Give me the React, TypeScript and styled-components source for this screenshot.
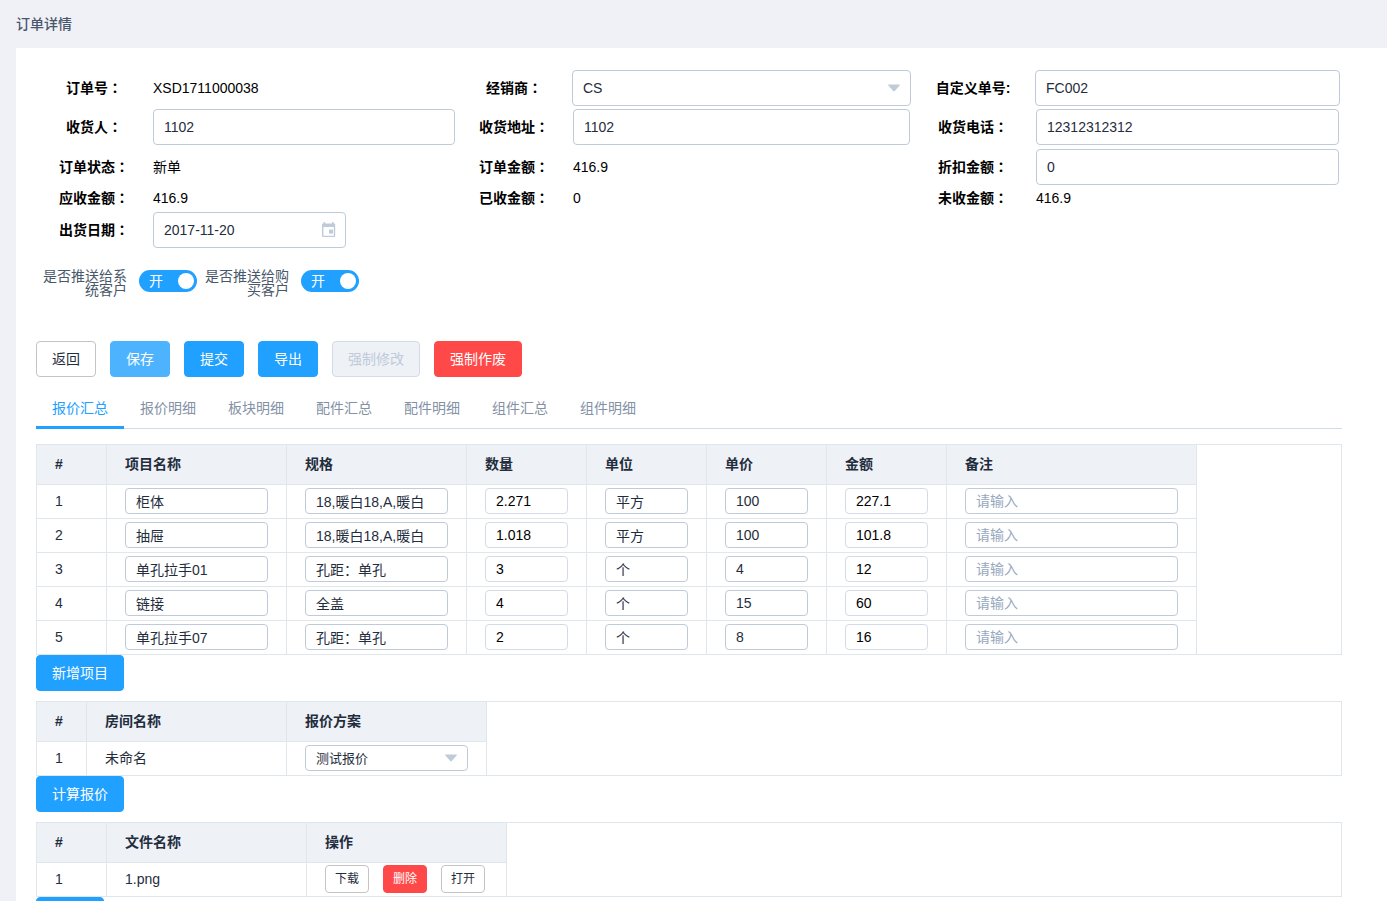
import React, { useState } from "react";
import styled, { createGlobalStyle, css } from "styled-components";

const color = {
  page: "#f0f1f7",
  blue: "#20a0ff",
  blueLight: "#4db3ff",
  red: "#ff4949",
  ink: "#1f2d3d",
  muted: "#48576a",
  tab: "#8391a5",
  hint: "#97a8be",
  field: "#bfcbd9",
  fieldOff: "#d3dce6",
  head: "#eef1f6",
  line: "#dfe6ec",
  button: "#c4c4c4",
};

const GlobalStyle = createGlobalStyle`
  *, *::before, *::after { box-sizing: border-box; }
  body {
    margin: 0;
    background: ${color.page};
    color: #000;
    font-family: "Liberation Sans", "Noto Sans CJK SC", sans-serif;
    font-size: 14px;
    line-height: 19px;
  }
  button, input, select { font: inherit; }
`;

const Page = styled.div`
  min-height: 100vh;
  padding-left: 16px;
`;

const Title = styled.h1`
  margin: 0;
  font-size: 14px;
  font-weight: 500;
  line-height: 48px;
  color: ${color.muted};
`;

const Panel = styled.main`
  padding: 22px 45px 20px 20px;
  background: #fff;
`;

const Details = styled.div`
  display: grid;
  grid-template-columns: 116px 304fr 116px 339fr 124px 305fr;
  row-gap: 2px;
  align-items: center;
  padding-right: 2px;
`;

const FieldLabel = styled.label`
  font-weight: 700;
  text-align: center;
`;

/* The TC face sets the full-width colon in the middle of its box. */
const Colon = styled.span`
  font-family: "Noto Sans CJK TC", sans-serif;
  line-height: 1;
`;

const FieldValue = styled.div<{ $flush?: boolean }>`
  min-width: 0;
  padding: ${(p) => (p.$flush ? "0" : "1px")};
`;

const control = css<{ $small?: boolean }>`
  display: block;
  width: 100%;
  height: ${(p) => (p.$small ? "26px" : "36px")};
  padding: 0 10px;
  border: 1px solid ${color.field};
  border-radius: 4px;
  background: #fff;
  color: ${color.ink};
  outline: none;
  &:focus { border-color: ${color.blue}; }
`;

const TextInput = styled.input<{ $small?: boolean }>`
  ${control}
  &::placeholder { color: ${color.hint}; opacity: 1; }
  &:disabled {
    border-color: ${color.fieldOff};
    color: #000;
  }
`;

const SelectInput = styled.select<{ $small?: boolean }>`
  ${control}
  appearance: none;
  padding-right: 32px;
  font-size: ${(p) => (p.$small ? "13px" : "14px")};
`;

const ControlWrap = styled.div<{ $width?: string }>`
  position: relative;
  width: ${(p) => p.$width ?? "100%"};
`;

const ControlIcon = styled.span`
  position: absolute;
  top: 0;
  right: 10px;
  bottom: 0;
  display: flex;
  align-items: center;
  pointer-events: none;
  color: ${color.field};
  svg { display: block; }
`;

const Switches = styled.div`
  display: flex;
  gap: 8px;
  margin: 20px 0 44px 7px;
`;

const SwitchItem = styled.label`
  display: flex;
  align-items: center;
  gap: 12px;
  color: ${color.muted};
  cursor: pointer;
`;

const SwitchText = styled.span`
  width: 84px;
  line-height: 14px;
  text-align: right;
`;

const SwitchInput = styled.input`
  position: absolute;
  width: 58px;
  height: 22px;
  margin: 0;
  opacity: 0;
`;

const SwitchTrack = styled.span<{ $on: boolean }>`
  display: flex;
  flex-direction: ${(p) => (p.$on ? "row" : "row-reverse")};
  align-items: center;
  justify-content: space-between;
  width: 58px;
  height: 22px;
  margin-bottom: 4px;
  padding: ${(p) => (p.$on ? "0 3px 0 10px" : "0 10px 0 3px")};
  border-radius: 11px;
  background: ${(p) => (p.$on ? color.blue : color.field)};
  color: #fff;
  &::after {
    content: "";
    width: 16px;
    height: 16px;
    border-radius: 50%;
    background: #fff;
  }
`;

const Actions = styled.div`
  display: flex;
  flex-wrap: wrap;
  gap: 14px;
`;

type Tone = "plain" | "primary" | "light" | "danger";

const tones: Record<Tone, { bg: string; border: string; text: string }> = {
  plain: { bg: "#fff", border: color.button, text: color.ink },
  primary: { bg: color.blue, border: color.blue, text: "#fff" },
  light: { bg: color.blueLight, border: color.blueLight, text: "#fff" },
  danger: { bg: color.red, border: color.red, text: "#fff" },
};

const Button = styled.button<{ $tone?: Tone; $small?: boolean }>`
  display: block;
  height: ${(p) => (p.$small ? "28px" : "36px")};
  padding: 0 ${(p) => (p.$small ? "9px" : "15px")};
  border: 1px solid ${(p) => tones[p.$tone ?? "plain"].border};
  border-radius: 4px;
  background: ${(p) => tones[p.$tone ?? "plain"].bg};
  color: ${(p) => tones[p.$tone ?? "plain"].text};
  font-size: ${(p) => (p.$small ? "12px" : "14px")};
  line-height: 1;
  white-space: nowrap;
  cursor: pointer;
  &:disabled {
    border-color: ${color.fieldOff};
    background: ${color.head};
    color: ${color.field};
    cursor: not-allowed;
  }
`;

const Tabs = styled.div`
  display: flex;
  margin: 10px 0 15px;
  border-bottom: 1px solid ${color.fieldOff};
`;

const Tab = styled.button<{ $active: boolean }>`
  height: 42px;
  margin-bottom: -1px;
  padding: 3px 16px 0;
  border: 0;
  border-bottom: 3px solid ${(p) => (p.$active ? color.blue : "transparent")};
  background: none;
  color: ${(p) => (p.$active ? color.blue : color.tab)};
  white-space: nowrap;
  cursor: pointer;
`;

const TableFrame = styled.div`
  overflow-x: auto;
  border: 1px solid ${color.line};
  & + button { margin-bottom: 10px; }
`;

const Table = styled.table`
  table-layout: fixed;
  width: 0;
  border-collapse: separate;
  border-spacing: 0;
  color: ${color.ink};
  tbody tr:last-child td {
    height: 33px;
    border-bottom: 0;
  }
`;

const Th = styled.th<{ $width: number }>`
  width: ${(p) => p.$width}px;
  height: 40px;
  padding: 0 18px;
  border-right: 1px solid ${color.line};
  border-bottom: 1px solid ${color.line};
  background: ${color.head};
  text-align: left;
`;

const Td = styled.td`
  height: 34px;
  padding: 0 18px 1px;
  border-right: 1px solid ${color.line};
  border-bottom: 1px solid ${color.line};
`;

const RowActions = styled.div`
  display: flex;
  gap: 14px;
`;

const Caret = () => (
  <svg width="14" height="8" viewBox="0 0 14 8" fill="currentColor" aria-hidden="true">
    <path d="M1.6 0.5h10.8q1 0 .4.8L7.8 6.9q-.8.8-1.6 0L1.2 1.3q-.6-.8.4-.8z" />
  </svg>
);

const CalendarIcon = () => (
  <svg width="14" height="16" viewBox="0 0 14 16" fill="currentColor" aria-hidden="true">
    <path d="M1.6 0h1.600v2H1.6zM10 0h1.600v2H10z" />
    <path
      fillRule="evenodd"
      d="M1 1.400h11.200q1 0 1 1v11.600q0 1-1 1H1q-1 0-1-1V2.400q0-1 1-1zM1.400 5v8.700h10.400V5z"
    />
    <path d="M7 7.600h4v4H7z" />
  </svg>
);

type Column = { title: string; width: number };

const DataTable = ({ columns, children }: { columns: Column[]; children: React.ReactNode }) => (
  <TableFrame>
    <Table>
      <thead>
        <tr>
          {columns.map((c) => (
            <Th key={c.title} $width={c.width} scope="col">
              {c.title}
            </Th>
          ))}
        </tr>
      </thead>
      <tbody>{children}</tbody>
    </Table>
  </TableFrame>
);

const Label = ({ text, htmlFor }: { text: string; htmlFor?: string }) => (
  <FieldLabel as={htmlFor ? "label" : "span"} htmlFor={htmlFor}>
    {text}
    <Colon>：</Colon>
  </FieldLabel>
);

const Switch = ({ label }: { label: string }) => {
  const [on, setOn] = useState(true);
  return (
    <SwitchItem>
      <SwitchText>{label}</SwitchText>
      <SwitchInput type="checkbox" role="switch" checked={on} onChange={() => setOn(!on)} />
      <SwitchTrack $on={on}>{on ? "开" : "关"}</SwitchTrack>
    </SwitchItem>
  );
};

const itemColumns: Column[] = [
  { title: "#", width: 70 },
  { title: "项目名称", width: 180 },
  { title: "规格", width: 180 },
  { title: "数量", width: 120 },
  { title: "单位", width: 120 },
  { title: "单价", width: 120 },
  { title: "金额", width: 120 },
  { title: "备注", width: 250 },
];

const items = [
  ["柜体", "18,暖白18,A,暖白", "2.271", "平方", "100", "227.1"],
  ["抽屉", "18,暖白18,A,暖白", "1.018", "平方", "100", "101.8"],
  ["单孔拉手01", "孔距：单孔", "3", "个", "4", "12"],
  ["链接", "全盖", "4", "个", "15", "60"],
  ["单孔拉手07", "孔距：单孔", "2", "个", "8", "16"],
];

const computed = ["数量", "金额"];

const roomColumns: Column[] = [
  { title: "#", width: 50 },
  { title: "房间名称", width: 200 },
  { title: "报价方案", width: 200 },
];

const fileColumns: Column[] = [
  { title: "#", width: 70 },
  { title: "文件名称", width: 200 },
  { title: "操作", width: 200 },
];

const tabNames = ["报价汇总", "报价明细", "板块明细", "配件汇总", "配件明细", "组件汇总", "组件明细"];

export default function App() {
  const [tab, setTab] = useState(tabNames[0]);
  return (
    <>
      <GlobalStyle />
      <Page>
        <Title>订单详情</Title>
        <Panel>
          <Details>
            <Label text="订单号" />
            <FieldValue>XSD1711000038</FieldValue>
            <Label text="经销商" htmlFor="dealer" />
            <FieldValue $flush>
              <ControlWrap>
                <SelectInput id="dealer" defaultValue="CS">
                  <option>CS</option>
                </SelectInput>
                <ControlIcon>
                  <Caret />
                </ControlIcon>
              </ControlWrap>
            </FieldValue>
            <FieldLabel htmlFor="custom-no">自定义单号:</FieldLabel>
            <FieldValue $flush>
              <TextInput id="custom-no" defaultValue="FC002" />
            </FieldValue>

            <Label text="收货人" htmlFor="receiver" />
            <FieldValue>
              <TextInput id="receiver" defaultValue="1102" />
            </FieldValue>
            <Label text="收货地址" htmlFor="address" />
            <FieldValue>
              <TextInput id="address" defaultValue="1102" />
            </FieldValue>
            <Label text="收货电话" htmlFor="phone" />
            <FieldValue>
              <TextInput id="phone" type="tel" defaultValue="12312312312" />
            </FieldValue>

            <Label text="订单状态" />
            <FieldValue>新单</FieldValue>
            <Label text="订单金额" />
            <FieldValue>416.9</FieldValue>
            <Label text="折扣金额" htmlFor="discount" />
            <FieldValue>
              <TextInput id="discount" defaultValue="0" />
            </FieldValue>

            <Label text="应收金额" />
            <FieldValue>416.9</FieldValue>
            <Label text="已收金额" />
            <FieldValue>0</FieldValue>
            <Label text="未收金额" />
            <FieldValue>416.9</FieldValue>

            <Label text="出货日期" htmlFor="ship-date" />
            <FieldValue>
              <ControlWrap $width="193px">
                <TextInput id="ship-date" defaultValue="2017-11-20" />
                <ControlIcon>
                  <CalendarIcon />
                </ControlIcon>
              </ControlWrap>
            </FieldValue>
          </Details>

          <Switches>
            <Switch label="是否推送给系统客户" />
            <Switch label="是否推送给购买客户" />
          </Switches>

          <Actions>
            <Button>返回</Button>
            <Button $tone="light">保存</Button>
            <Button $tone="primary">提交</Button>
            <Button $tone="primary">导出</Button>
            <Button disabled>强制修改</Button>
            <Button $tone="danger">强制作废</Button>
          </Actions>

          <Tabs role="tablist">
            {tabNames.map((name) => (
              <Tab
                key={name}
                role="tab"
                aria-selected={name === tab}
                $active={name === tab}
                onClick={() => setTab(name)}
              >
                {name}
              </Tab>
            ))}
          </Tabs>

          <DataTable columns={itemColumns}>
            {items.map((cells, row) => (
              <tr key={row}>
                <Td>{row + 1}</Td>
                {cells.map((value, i) => {
                  const title = itemColumns[i + 1].title;
                  return (
                    <Td key={title}>
                      <TextInput
                        $small
                        aria-label={title}
                        defaultValue={value}
                        disabled={computed.includes(title)}
                      />
                    </Td>
                  );
                })}
                <Td>
                  <TextInput $small aria-label="备注" placeholder="请输入" />
                </Td>
              </tr>
            ))}
          </DataTable>
          <Button $tone="primary">新增项目</Button>

          <DataTable columns={roomColumns}>
            <tr>
              <Td>1</Td>
              <Td>未命名</Td>
              <Td>
                <ControlWrap>
                  <SelectInput $small aria-label="报价方案" defaultValue="测试报价">
                    <option>测试报价</option>
                  </SelectInput>
                  <ControlIcon>
                    <Caret />
                  </ControlIcon>
                </ControlWrap>
              </Td>
            </tr>
          </DataTable>
          <Button $tone="primary">计算报价</Button>

          <DataTable columns={fileColumns}>
            <tr>
              <Td>1</Td>
              <Td>1.png</Td>
              <Td>
                <RowActions>
                  <Button $small>下载</Button>
                  <Button $small $tone="danger">
                    删除
                  </Button>
                  <Button $small>打开</Button>
                </RowActions>
              </Td>
            </tr>
          </DataTable>
          <Button $small $tone="primary">
            上传文件
          </Button>
        </Panel>
      </Page>
    </>
  );
}
